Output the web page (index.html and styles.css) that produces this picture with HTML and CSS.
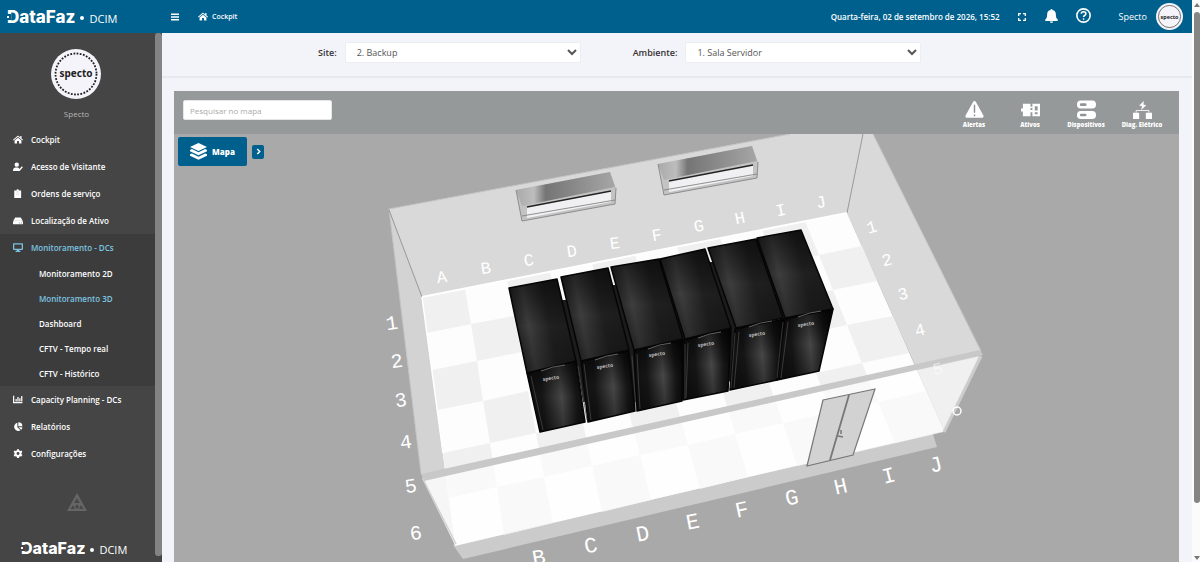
FILE: index.html
```html
<!DOCTYPE html>
<html lang="pt-BR">
<head>
<meta charset="utf-8">
<title>DataFaz DCIM - Monitoramento 3D</title>
<link rel="stylesheet" href="styles.css">
</head>
<body>
<svg class="defs" aria-hidden="true">
  <symbol id="home" viewBox="0 0 16 14"><path d="M8 .6 0 7.4l1 1.1L8 2.7l7 5.8 1-1.1-2.4-2V1.500h-2v2.200zM2.500 8.700V13.500h4V9.500h3v4h4V8.700L8 4.200z"/></symbol>
</svg>
<div class="window">
  <div class="app">
    <header class="topbar">
      <a class="brand" href="#"><span class="brand-name">DataFaz</span><span class="brand-dot"></span><span class="brand-sub">DCIM</span></a>
      <button class="icon-btn" type="button" aria-label="Menu"><svg class="ic-menu" viewBox="0 0 8 8"><path d="M0 .5h8v1.400H0zM0 3.300h8v1.400H0zM0 6.100h8v1.400H0z"/></svg></button>
      <a class="crumb" href="#"><svg class="ic-home" viewBox="0 0 16 14"><use href="#home"/></svg>Cockpit</a>
      <div class="top-right">
        <time class="clock">Quarta-feira, 02 de setembro de 2026, 15:52</time>
        <button class="icon-btn" type="button" aria-label="Tela cheia"><svg class="ic-full line" viewBox="0 0 8 8" stroke-width="1.300"><path d="M.7 3V.7H3M5 .7h2.300V3M7.300 5v2.300H5M3 7.300H.7V5"/></svg></button>
        <button class="icon-btn bell" type="button" aria-label="Notificações"><svg class="ic-bell" viewBox="0 0 14 15"><path d="M7 0c.7 0 1 .5 1 1.100 2.500.5 3.700 2.400 3.700 4.700 0 3 .7 4.200 2 5.400.6.600.2 1.600-.6 1.600H.9c-.8 0-1.200-1-.6-1.600 1.300-1.200 2-2.400 2-5.400C2.300 3.500 3.500 1.600 6 1.100 6 .5 6.300 0 7 0zM5.200 13.500h3.600a1.800 1.500 0 0 1-3.600 0z"/></svg></button>
        <button class="icon-btn help" type="button" aria-label="Ajuda"><svg class="ic-help line" viewBox="0 0 14 14"><circle cx="7" cy="7" r="6.200" stroke-width="1.500"/><path d="M4.900 5.300C5 4 6 3.500 7 3.500c1.200 0 2.200.7 2.200 1.800 0 1.500-2.100 1.500-2.100 3" stroke-width="1.500"/><circle cx="7.100" cy="10.300" r=".5" stroke-width=".9"/></svg></button>
        <a class="user" href="#">Specto<svg class="user-pic" viewBox="0 0 50 50"><circle cx="25" cy="25" r="25" fill="#f4f4fa"/><circle cx="25" cy="25" r="20.500" fill="none" stroke="#555" stroke-width="1.500"/><text x="25" y="29" text-anchor="middle" class="seal-text">specto</text></svg></a>
      </div>
    </header>
    <div class="body">
      <aside class="sidebar">
        <div class="side-main">
          <svg class="profile-pic" viewBox="0 0 50 50"><circle cx="25" cy="25" r="25" fill="#f4f4fa"/><circle cx="25" cy="25" r="20.500" fill="none" stroke="#222" stroke-width="1.800" stroke-dasharray="1.800 1.420"/><text x="25" y="28" text-anchor="middle" class="seal-text">specto</text></svg>
          <p class="profile-name">Specto</p>
          <nav>
            <a class="item" href="#"><svg class="ic" viewBox="0 0 16 14"><use href="#home"/></svg>Cockpit</a>
            <a class="item" href="#"><svg class="ic" viewBox="0 0 16 14"><circle cx="6" cy="4" r="3.500"/><path d="M0 14c0-4 2-5.500 4-5.500h4l1 1 1.500 1.600L14 6.500l1.800 1.500-5.200 6z"/></svg>Acesso de Visitante</a>
            <a class="item" href="#"><svg class="ic" viewBox="0 0 16 14"><path d="M2 2h3.500a2 2 0 0 1 4 0H13v12H2z"/><path d="M5 4.500h5M5 8h5" stroke="#bbb" stroke-width=".8"/></svg>Ordens de serviço</a>
            <a class="item" href="#"><svg class="ic" viewBox="0 0 16 14"><path d="M3.500 2h9L15.500 7.500h-15zM0 8.500h16V12q0 1-1 1H1q-1 0-1-1z"/><path d="M1 7h14v3H1z"/><path d="M10 11h1.500M13 11h1.300" stroke="#444"/></svg>Localização de Ativo</a>
            <div class="group">
              <a class="item on" href="#"><svg class="ic" viewBox="0 0 16 14"><path d="M1.500 0h13Q16 0 16 1.500v8q0 1.500-1.500 1.500H10l.4 1.500H12V14H4v-1.500h1.600L6 11H1.500Q0 11 0 9.500v-8Q0 0 1.500 0zM2 2v7h12V2z" fill-rule="evenodd"/></svg>Monitoramento - DCs</a>
              <a class="sub" href="#">Monitoramento 2D</a>
              <a class="sub on" href="#">Monitoramento 3D</a>
              <a class="sub" href="#">Dashboard</a>
              <a class="sub" href="#">CFTV - Tempo real</a>
              <a class="sub" href="#">CFTV - Histórico</a>
            </div>
            <a class="item" href="#"><svg class="ic" viewBox="0 0 16 14"><path d="M0 1h2v10h13v2H0zM4 6h2v4H4zM7 3h2v7H7zM10 5h2v5h-2zM13 1.500h2V10h-2z"/></svg>Capacity Planning - DCs</a>
            <a class="item" href="#"><svg class="ic" viewBox="0 0 16 14"><path d="M7 1v7l5 5A6.600 6.600 0 1 1 7 1z"/><path d="M8.500 0A6.500 6.500 0 0 1 15 6.500H8.500zM9 8h6a6 6 0 0 1-2 4z"/></svg>Relatórios</a>
            <a class="item" href="#"><svg class="ic" viewBox="0 0 16 14"><path fill-rule="evenodd" d="M6.500 0h3l.5 2 1.500.8 2-.6L15 4.700 13.500 6.200v1.600L15 9.300l-1.500 2.500-2-.6-1.500.8-.5 2h-3L6 12l-1.500-.8-2 .6L1 9.300l1.500-1.500V6.200L1 4.700l1.500-2.500 2 .6L6 2zM8 4.700a2.300 2.300 0 1 0 0 4.600 2.300 2.300 0 0 0 0-4.600z"/></svg>Configurações</a>
          </nav>
          <svg class="tri" viewBox="0 0 20 18"><path d="M10 0 20 18H0z" fill="#666"/><path d="M10 5 7 10h6zM6 12l-2.500 4H8zM14 12l2.500 4H12zM10 11l-2 3 2 2 2-2z" fill="#484848"/></svg>
          <a class="brand foot" href="#"><span class="brand-name">DataFaz</span><span class="brand-dot"></span><span class="brand-sub">DCIM</span></a>
        </div>
        <div class="side-scroll"></div>
      </aside>
      <main class="content">
        <form class="filters">
          <label for="site">Site:</label>
          <select id="site"><option>2. Backup</option></select>
          <label class="second" for="amb">Ambiente:</label>
          <select id="amb"><option>1. Sala Servidor</option></select>
        </form>
        <section class="panel">
          <div class="toolbar">
            <input class="search" type="text" placeholder="Pesquisar no mapa" aria-label="Pesquisar no mapa">
            <div class="tools">
              <button type="button" class="tool"><svg viewBox="0 0 20 20"><path d="M8.600 1.800a1.600 1.600 0 0 1 2.800 0l8 14.500c.6 1.200-.2 2.500-1.400 2.500H2c-1.200 0-2-1.300-1.400-2.500z"/><path d="M10 5v8.500M10 15.200v1.800" stroke="#8a8f8f" stroke-width="1.500"/></svg>Alertas</button>
              <button type="button" class="tool"><svg viewBox="0 0 20 20"><path fill-rule="evenodd" d="M2 4h8v3h2V4h8v13h-8v-4h-2v4H2v-5H0V9h2zM14.500 6.500V11H17.500V6.500zM14.500 13v2h3v-2zM10 8.500v2h2v-2z"/></svg>Ativos</button>
              <button type="button" class="tool"><svg viewBox="0 0 20 20"><rect x="0" y=".5" width="20" height="8.500" rx="4"/><rect x="0" y="11.500" width="20" height="8.500" rx="4"/><rect x="3" y="3.500" width="7" height="2.800" rx="1.400" fill="#8f9494"/><rect x="3" y="14.400" width="7" height="2.800" rx="1.400" fill="#8f9494"/></svg>Dispositivos</button>
              <button type="button" class="tool"><svg viewBox="0 0 20 20"><path d="m11.500 1-5 4.800 3 .7-1 4 5.500-5-3-.8zM0 13.500h6.500V20H0zM13.500 13.500H20V20h-6.500z"/><path d="M3.300 13.500V11h13.400v2.500" fill="none" stroke="#fff" stroke-width=".9"/></svg>Diag. Elétrico</button>
            </div>
          </div>
          <div class="map">
            <svg class="scene" viewBox="174 134 1005 428" preserveAspectRatio="xMidYMin slice" role="img" aria-label="Mapa 3D da sala">
              <defs>
                <linearGradient id="top" x1="0" y1=".6" x2="1" y2=".35"><stop offset=".05" stop-color="#1a1a1a"/><stop offset=".3" stop-color="#3e3e3e"/><stop offset=".6" stop-color="#202020"/><stop offset="1" stop-color="#1b1b1b"/></linearGradient>
                <linearGradient id="front" x1="0" y1=".1" x2="1" y2="0"><stop offset="0" stop-color="#111"/><stop offset=".22" stop-color="#161616"/><stop offset=".55" stop-color="#474747"/><stop offset=".8" stop-color="#161616"/><stop offset="1" stop-color="#050505"/></linearGradient>
                <linearGradient id="shade" x1="0" y1="0" x2="0" y2="1"><stop offset="0" stop-color="#000" stop-opacity=".6"/><stop offset=".5" stop-color="#000" stop-opacity="0"/><stop offset="1" stop-color="#000" stop-opacity=".35"/></linearGradient>
                <linearGradient id="steel"><stop offset="0" stop-color="#aaa"/><stop offset=".18" stop-color="#bdbdbd"/><stop offset=".3" stop-color="#757575"/><stop offset="1" stop-color="#a6a6a6"/></linearGradient>
              </defs>
              <!-- walls behind the floor -->
              <path d="M389 209 790 134H863L847 213 422 297z" fill="#d9d9d9"/>
              <path d="M863 134h10L981 351 945 432 847 213z" fill="#d9d9d9"/>
              <path d="M389 209 422 297 447 478 421 474z" fill="#d3d3d3"/>
              <path d="M422 478 447 475 455 545z" fill="#e9e9e9"/>
              <path d="M421 473 389 209 790 134M873 134 981 351" fill="none" stroke="#c4c4c4"/>
              <path d="M389 210 422 297M863 134 847 213" fill="none" stroke="#9b9b9b"/>
              <!-- slab and floor tiles -->
              <path d="M453 545 463 559 937 447 930 425z" fill="#cbcbcb"/>
              <path d="M422 297 847 213 944 431 455 546z" fill="#fdfdfd"/>
              <path fill="#f0f0f0" d="M422 297 465 289 471 324 427 333zM507 280 550 272 558 307 514 316zM592 263 635 255 645 290 601 298zM677 247 720 238 732 272 688 281zM762 230 805 221 819 255 775 263z
                M471 324 514 316 521 352 477 361zM819 255 862 246 877 281 833 290z
                M432 370 477 361 483 401 437 410zM788 299 833 290 847 325 802 335z
                M483 401 528 391 536 433 490 443zM574 382 619 372 629 413 583 423zM665 363 711 354 723 393 676 403zM756 344 802 335 816 373 769 383zM847 325 893 316 909 353 862 363z
                M443 453 490 443 497 487 449 498zM536 433 583 423 592 466 544 477zM629 413 676 403 688 445 640 455zM723 393 769 383 783 423 735 434zM816 373 862 363 878 402 831 412z
                M497 487 544 477 553 523 504 535zM592 466 640 455 651 500 602 512zM688 445 735 434 748 477 700 489zM783 423 831 412 846 454 797 466zM878 402 926 391 944 431 895 443z"/>
              <path d="M422 297 847 213" stroke="#fff" stroke-width="2"/>
              <path d="M422 297 443 453" stroke="#fff" stroke-width="1.500"/>
              <!-- air conditioners -->
              <g id="ac">
                <path d="M658 164 752 146 758 162 757 178 664 195z" fill="#c3c3c3"/>
                <path d="M658 164 752 146 757 161 664 180z" fill="url(#steel)"/>
                <path d="M669 181 753 165V176L669 192z" fill="#f0f0f2"/>
                <path d="M669 181 753 165" stroke="#222" stroke-width="1.500"/>
                <path d="M658 164 664 195 757 178 758 162M664 190 757 174" fill="none" stroke="#858585" stroke-width=".9"/>
              </g>
              <use href="#ac" x="-142" y="26"/>
              <!-- racks -->
              <path d="M561 300 576 361 583 402 592 402 585 361 568 300zM612 285 629 350 634 402 639 402 637 351 620 285zM655 259 683 339 680 400 688 399 690 338 664 259zM709 262 731 329 727 382 732 381 740 328 716 262zM750 240 783 318 774 380 780 379 790 317 762 240z" fill="#1c1c1c"/>
              <g stroke="#060606" stroke-width="1.500" stroke-linejoin="round">
                <g fill="url(#front)">
                  <path d="M527 373 576 361 585 422 540 432z"/><path d="M581 361 629 351 635 411 588 422z"/><path d="M634 351 683 340 682 401 637 411z"/><path d="M684 340 731 329 728 391 683 400z"/><path d="M735 329 784 319 777 380 730 390z"/><path d="M785 319 833 309 819 371 777 380z"/>
                </g>
                <g fill="url(#shade)" stroke="none">
                  <path d="M527 373 576 361 585 422 540 432z"/><path d="M581 361 629 351 635 411 588 422z"/><path d="M634 351 683 340 682 401 637 411z"/><path d="M684 340 731 329 728 391 683 400z"/><path d="M735 329 784 319 777 380 730 390z"/><path d="M785 319 833 309 819 371 777 380z"/>
                </g>
                <g fill="url(#top)">
                  <path d="M509 288 557 279 576 361 527 373z"/><path d="M561 277 608 268 629 350 581 361z"/><path d="M611 267 659 259 683 339 634 350z"/><path d="M660 259 705 249 731 328 685 339z"/><path d="M708 248 756 239 783 318 736 328z"/><path d="M757 238 801 230 833 309 785 318z"/>
                </g>
              </g>
              <g fill="url(#shade)" opacity=".8">
                <path d="M509 288 557 279 576 361 527 373z"/><path d="M561 277 608 268 629 350 581 361z"/><path d="M611 267 659 259 683 339 634 350z"/><path d="M660 259 705 249 731 328 685 339z"/><path d="M708 248 756 239 783 318 736 328z"/><path d="M757 238 801 230 833 309 785 318z"/>
              </g>
              <path d="M541 371q12-5 24-6M595 360q12-5 23-6M648 349q12-5 23-6M698 338q12-5 23-6M749 327q12-5 23-6M798 317q12-5 23-6" fill="none" stroke="#777" stroke-width=".8"/>
              <path d="M531 376 543 430M584 364 591 420M578 366 587 420M632 356 636 409M637 354 640 409M685 344V399M688 343 686 398M735 333 731 388M739 332 734 388M783 322 777 378M788 322 781 378" stroke="#4c4c4c" stroke-width=".7"/>
              <g class="rack-name">
                <text transform="translate(543 381) rotate(-8)">specto</text><text transform="translate(597 369) rotate(-8)">specto</text><text transform="translate(649 357) rotate(-8)">specto</text><text transform="translate(698 347) rotate(-8)">specto</text><text transform="translate(749 337) rotate(-8)">specto</text><text transform="translate(798 327) rotate(-8)">specto</text>
              </g>
              <!-- front wall and door -->
              <path d="M424 480 981 356 944 432 455 545z" fill="#fff" fill-opacity=".6"/>
              <path d="M421 474 980 350 983 355 424 481z" fill="#c8c8c8"/>
              <path d="M981 356 944 432" stroke="#cdcdcd" stroke-width="3"/>
              <path d="M424 481 456 544" stroke="#d2d2d2" stroke-width="1.500"/>
              <path d="M823 400 875 389 853 455 807 466z" fill="#d2d2d2" stroke="#777" stroke-width="1.200"/>
              <path d="M849 395 830 460" stroke="#777" stroke-width="1.800"/>
              <path d="M841 430v4M838 436l5 1" stroke="#777" stroke-width="1.500"/>
              <g class="coord">
                <g class="far">
                  <text transform="translate(442 278) rotate(-8)">A</text><text transform="translate(486 269) rotate(-8)">B</text><text transform="translate(529 261) rotate(-8)">C</text><text transform="translate(572 252) rotate(-8)">D</text><text transform="translate(615 244) rotate(-8)">E</text><text transform="translate(657 236) rotate(-10)">F</text><text transform="translate(699 227) rotate(-10)">G</text><text transform="translate(740 219) rotate(-12)">H</text><text transform="translate(781 211) rotate(-12)">I</text><text transform="translate(821 203) rotate(-12)">J</text>
                  <text transform="translate(872 228) rotate(-16)">1</text><text transform="translate(887 261) rotate(-14)">2</text><text transform="translate(903 295) rotate(-14)">3</text><text transform="translate(920 331) rotate(-14)">4</text><text opacity=".55" transform="translate(938 370) rotate(-14)">5</text>
                </g>
                <circle cx="957" cy="411" r="4" fill="none" stroke="#fff" stroke-width="1.500"/>
                <g class="near">
                  <text transform="translate(392 324) rotate(-8)">1</text><text transform="translate(397 362) rotate(-8)">2</text><text transform="translate(401 401) rotate(-8)">3</text><text transform="translate(406 443) rotate(-8)">4</text><text transform="translate(411 487) rotate(-8)">5</text><text transform="translate(416 534) rotate(-8)">6</text>
                </g>
                <g class="near big">
                  <text transform="translate(539 559) rotate(-10)">B</text><text transform="translate(591 547) rotate(-10)">C</text><text transform="translate(643 535) rotate(-11)">D</text><text transform="translate(693 523) rotate(-11)">E</text><text transform="translate(742 511) rotate(-12)">F</text><text transform="translate(792 499) rotate(-12)">G</text><text transform="translate(841 488) rotate(-13)">H</text><text transform="translate(889 477) rotate(-14)">I</text><text transform="translate(936 466) rotate(-14)">J</text>
                </g>
              </g>
            </svg>
            <div class="map-controls">
              <button type="button" class="map-btn"><svg viewBox="0 0 18 18"><path d="M9 0 18 4.300 9 8.600 0 4.300z"/><path d="m0 7.300 2-.9 7 3.400 7-3.400 2 .9v1.500l-9 4.300-9-4.300zM0 12l2-.9 7 3.400 7-3.400 2 .9v1.500L9 17.800 0 13.500z"/></svg>Mapa</button>
              <button type="button" class="map-next" aria-label="Expandir"><svg class="line" viewBox="0 0 6 8" stroke-width="1.700"><path d="m1.500 1 3 3-3 3"/></svg></button>
            </div>
          </div>
        </section>
      </main>
    </div>
  </div>
  <div class="page-scroll" aria-hidden="true"><i class="arrow up"></i><i class="thumb"></i><i class="arrow down"></i></div>
</div>
</body>
</html>
```
FILE: styles.css
```css
* { box-sizing: border-box; }
body { margin: 0; font-family: "Open Sans", "Noto Sans", sans-serif; font-size: 9px; color: #fff; background: #f3f4f9; }
a { color: inherit; text-decoration: none; }
button { font: inherit; color: inherit; border: 0; background: none; padding: 0; }
svg { display: block; fill: currentColor; flex: none; }
.line { fill: none; stroke: currentColor; }
.defs { position: absolute; width: 0; height: 0; }

.window { display: flex; height: 100vh; overflow: hidden; }
.app { flex: 1; min-width: 0; display: flex; flex-direction: column; }
.body { flex: 1; min-height: 0; display: flex; }

.topbar { display: flex; align-items: center; height: 33px; padding: 0 9px 0 7px; background: #00608d; font-weight: 500; }
.brand { display: flex; align-items: center; }
.brand-name { position: relative; font: 800 17px/20px "Inter", sans-serif; }
.brand-name::before { content: ""; position: absolute; left: 0; top: 7px; width: 4px; height: 6px; background: radial-gradient(circle at 1px 3px, #fff 1px, transparent 1px), #00608d; }
.brand-dot { width: 4px; height: 4px; margin: 3px 5px 0 5px; border-radius: 50%; background: #fff; }
.brand-sub { font-size: 11px; font-weight: 400; line-height: 16px; padding-top: 4px; }
.topbar .brand { width: 164px; }
.ic-menu { width: 8px; height: 8px; }
.crumb { display: flex; align-items: center; gap: 4px; margin-left: 19px; font-size: 7px; font-weight: 600; }
.ic-home { width: 10px; height: 9px; }
.top-right { display: flex; align-items: center; margin-left: auto; }
.clock { font-size: 8px; font-weight: 600; }
.ic-full { width: 8px; height: 8px; margin-left: 18px; }
.ic-bell { width: 13px; height: 14px; margin-left: 19px; }
.ic-help { width: 15px; height: 15px; margin-left: 18px; }
.bell, .help { padding-bottom: 2px; }
.user { display: flex; align-items: center; gap: 9px; margin-left: 28px; }
.user-pic { width: 27px; height: 27px; }
.seal-text { font: 700 10px "Noto Sans", sans-serif; fill: #222; }

.sidebar { display: flex; width: 162px; background: #454545; font-size: 8px; font-weight: 600; }
.side-main { flex: 1; display: flex; flex-direction: column; padding-top: 16px; }
.side-scroll { width: 7px; margin-bottom: 6px; background: #838383; border-radius: 3px; }
.profile-pic { width: 50px; height: 50px; margin-left: 51px; }
.profile-name { margin: 8px 0 5px; padding-right: 2px; text-align: center; line-height: 14px; font-size: 8px; font-weight: 400; color: #b5b5b5; }
.item { display: flex; align-items: center; gap: 8px; height: 27px; padding-left: 13px; }
.ic { width: 10px; height: 9px; }
.group { background: #3c3c3c; }
.sub { display: block; height: 25px; line-height: 25px; padding-left: 39px; }
.on { color: #7cc4e0; }
.tri { width: 20px; height: 18px; margin: 26px 0 0 67px; }
.foot { margin: 27px 0 0 21px; }
.foot .brand-name { font-size: 16px; }
.foot .brand-name::before { background: radial-gradient(circle at 1px 3px, #fff 1px, transparent 1px), #454545; }

.content { flex: 1; min-width: 0; display: flex; flex-direction: column; }
.filters { display: flex; align-items: center; height: 45px; padding: 0 156px 5px; border-bottom: 2px solid #e8e9ee; color: #333; font-weight: 600; }
.filters label { margin-right: 8px; }
.filters .second { margin-left: 52px; }
.filters select { width: 236px; height: 21px; padding: 0 0 0 7px; border: 1px solid #eceef2; border-radius: 2px; background: #fff; color: #555; font: 400 9px "Open Sans", sans-serif; }
.panel { flex: 1; min-height: 0; display: flex; flex-direction: column; margin: 13px 13px 0 12px; }
.toolbar { display: flex; align-items: flex-start; height: 43px; padding: 9px; background: #959999; }
.search { width: 149px; height: 20px; padding: 0 6px; border: 1px solid #e6e6e6; border-radius: 2px; background: #fff; font: 400 8px "Open Sans", sans-serif; }
.search::placeholder { color: #aaa; }
.tools { display: flex; margin-left: auto; }
.tool { display: flex; flex-direction: column; align-items: center; width: 56px; gap: 2px; font-size: 6px; line-height: 8px; font-weight: 800; white-space: nowrap; }
.tool svg { width: 19px; height: 19px; }
.map { position: relative; flex: 1; min-height: 0; overflow: hidden; background: #a9a9a9; }
.scene { width: 100%; height: 100%; }
.map-controls { position: absolute; left: 4px; top: 3px; display: flex; align-items: center; gap: 5px; }
.map-btn { display: flex; align-items: center; justify-content: center; gap: 5px; width: 69px; height: 29px; border-radius: 2px; background: #00608d; font-size: 8px; font-weight: 800; }
.map-btn svg { width: 17px; height: 17px; }
.map-next { display: flex; align-items: center; justify-content: center; width: 12px; height: 14px; border-radius: 2px; background: #00608d; }
.map-next svg { width: 5px; height: 7px; }
.coord { font-family: "Liberation Mono", monospace; fill: #fff; text-anchor: middle; dominant-baseline: central; }
.far { font-size: 17px; }
.near { font-size: 20px; }
.big { font-size: 22px; }
.rack-name { font: 700 5px "Open Sans", sans-serif; fill: #bbb; }

.page-scroll { display: flex; flex-direction: column; align-items: flex-end; width: 8px; padding: 3px 0 2px; background: #fbfbfc; }
.thumb { width: 6px; flex: 0 1 491px; margin: 5px 0 auto; border-radius: 3px; background: #858585; }
.arrow { border: 3px solid transparent; }
.up { border-top: 0; border-bottom: 4px solid #777; }
.down { border-bottom: 0; border-top: 4px solid #777; }
```
